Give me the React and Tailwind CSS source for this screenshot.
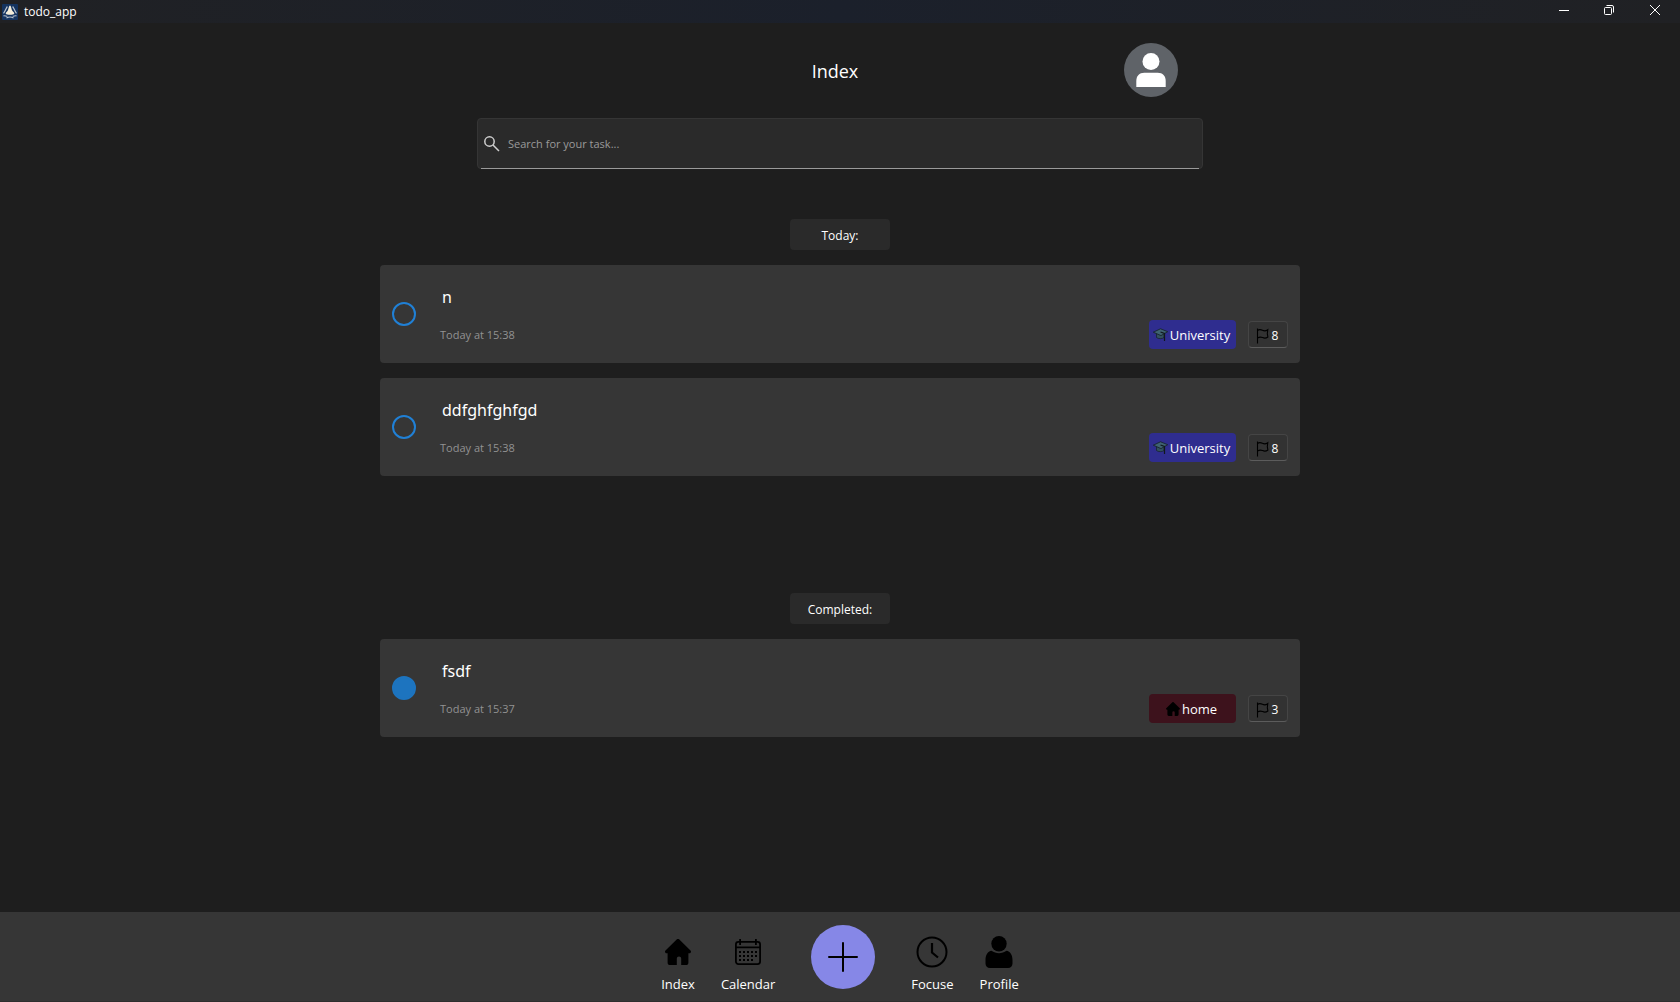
import React from "react";

const tasks = {
  today: [
    { id: "t1", title: "n", time: "Today at 15:38", category: "University", priority: 8 },
    { id: "t2", title: "ddfghfghfgd", time: "Today at 15:38", category: "University", priority: 8 },
  ],
  completed: [
    { id: "t3", title: "fsdf", time: "Today at 15:37", category: "home", priority: 3, done: true },
  ],
};

function HouseIcon({ className }) {
  return (
    <svg viewBox="0 0 26 26" className={className} fill="currentColor" aria-hidden="true">
      <path d="M11.400.7a2.300 2.300 0 0 1 3.200 0l10.900 10.900c1 1 .4 2.700-1.100 2.700h-1v9.100a2.600 2.600 0 0 1-2.600 2.600h-4.600v-6.400a2.200 2.200 0 0 0-4.400 0V26H5.200a2.600 2.600 0 0 1-2.600-2.600v-9.100h-1c-1.500 0-2.100-1.700-1.100-2.700z" />
    </svg>
  );
}

function CapIcon() {
  return (
    <svg viewBox="0 0 15 14" className="h-3.5 w-[15px] shrink-0" aria-hidden="true">
      <path d="M3.500 5v4.500c1.500 1.500 6 1.500 7.500 0V5" fill="#33505e" stroke="#141f26" strokeWidth=".7" />
      <path d="M.3 4.200 7.500.8l7.200 2.900L8 7.600z" fill="#3f6272" stroke="#141f26" strokeWidth=".8" strokeLinejoin="round" />
      <path d="M7.500 4 11.500 5.500V13" fill="none" stroke="#10181c" strokeWidth="1.200" />
    </svg>
  );
}

function FlagIcon() {
  return (
    <svg viewBox="0 0 13 16" className="h-4 w-[13px] shrink-0" fill="none" stroke="#000" strokeWidth="1.100" aria-hidden="true">
      <path d="M1.500.5v15M1.500 2.500c2-1.500 3.200-1 4.900-.2 1.900.9 3.400.9 5.400-.6l-.5 4 .6 3.300c-2.100 1.500-3.600 1.400-5.300.6-1.700-.8-3.100-.9-5.100.4" />
    </svg>
  );
}

function CalendarIcon() {
  const dots = [];
  for (let r = 0; r < 3; r++)
    for (let c = 0; c < 5; c++)
      if (!(r === 2 && c === 4)) dots.push(<rect key={r + "-" + c} x={4 + c * 4} y={12 + r * 4} width="2" height="2" />);
  return (
    <svg viewBox="0 0 26 26" className="size-[26px]" fill="currentColor" aria-hidden="true">
      <rect x=".9" y="2.900" width="24.200" height="22.200" rx="2.500" fill="none" stroke="currentColor" strokeWidth="1.800" />
      <path d="M1 7.500h24v1.700H1zM4.200 0H6v6H4.200zM20 0h1.800v6H20z" />
      {dots}
    </svg>
  );
}

function ClockIcon() {
  return (
    <svg viewBox="0 0 32 32" className="size-8" fill="none" stroke="currentColor" strokeWidth="2" aria-hidden="true">
      <circle cx="16" cy="16" r="14.500" />
      <path d="M16 7v9.500l6 5" strokeWidth="2.200" />
    </svg>
  );
}

function PersonIcon() {
  return (
    <svg viewBox="0 0 28 32" className="h-8 w-7" fill="currentColor" aria-hidden="true">
      <circle cx="14" cy="7.700" r="7.700" />
      <path d="M6.500 14.800c4.500 3.200 10.500 3.200 15 0 3.700.4 6 4.200 6 9.200v3.500c0 2.700-1.800 4.500-4.500 4.500H5c-2.700 0-4.500-1.800-4.500-4.500V24c0-5 2.300-8.800 6-9.200z" />
    </svg>
  );
}

function TitleBar() {
  return (
    <header className="flex h-[23px] items-start justify-between bg-linear-to-r from-[#202124] via-[#1b202b] to-[#202124] pr-px text-white">
      <div className="flex items-center gap-1.5 pt-[3px] pl-0.5">
        <svg viewBox="0 0 16 16" className="size-4" aria-hidden="true">
          <rect width="16" height="16" rx="1" fill="#14335f" />
          <path d="M8 1.500c1 0 1.300 3 2.200 5 .8 1.500 2.600 2.300 2 3.300-.8 1.300-7.600 1.300-8.400 0-.6-1 1.200-1.800 2-3.300.9-2 1.200-5 2.200-5z" fill="#f3ecd9" />
          <path d="M5.400 2.500C4 4 3.500 7 1.500 9.300M10.600 2.500C12 4 12.500 7 14.500 9.300M1.500 11.800c1.500-.3 2.400.4 3.800.5M14.500 11.800c-1.500-.3-2.400.4-3.800.5M4.500 14c2.300-1.300 4.700-1.300 7 0" fill="none" stroke="#b9c3cf" strokeWidth="1.200" />
        </svg>
        <span className="pt-px text-[12px] leading-4">todo_app</span>
      </div>
      <div className="flex">
        <button aria-label="Minimize" className="flex h-5 w-[45px] items-center justify-center">
          <svg viewBox="0 0 10 10" className="size-2.5" stroke="#fff"><path d="M0 5.500h10" /></svg>
        </button>
        <button aria-label="Restore" className="flex h-5 w-[45px] items-center justify-center">
          <svg viewBox="0 0 10 10" className="size-2.5" stroke="#fff" fill="none">
            <rect x=".5" y="2.500" width="7" height="7" rx="1" />
            <path d="M2.500.5H8A1.500 1.500 0 0 1 9.500 2v5.500" />
          </svg>
        </button>
        <button aria-label="Close" className="flex h-5 w-12 items-center justify-center">
          <svg viewBox="0 0 10 10" className="size-2.5" stroke="#fff"><path d="M0 0l10 10M10 0L0 10" /></svg>
        </button>
      </div>
    </header>
  );
}

function SectionButton({ children }) {
  return (
    <button className="h-[31px] w-[100px] rounded bg-[#2a2a2a] pt-0.5 text-[12px] leading-4 text-white">{children}</button>
  );
}

function TaskCard({ task }) {
  const university = task.category === "University";
  return (
    <li className="flex h-[98px] w-full items-center rounded bg-[#363636] px-3">
      <input
        type="checkbox"
        defaultChecked={task.done}
        aria-label={task.title}
        className="size-6 shrink-0 appearance-none rounded-full border-2 border-[#2080d6] checked:border-[#1d74bf] checked:bg-[#1d74bf]"
      />
      <div className="flex flex-1 flex-col gap-[19px] pt-px pl-6">
        <span className="pl-0.5 font-['Noto_Sans',sans-serif] text-[16px] leading-[22px] text-white">{task.title}</span>
        <span className="text-[11px] leading-4 text-[#929292]">{task.time}</span>
      </div>
      <div className="flex items-center gap-3 self-end pb-[14px]">
        <button
          className={
            "flex h-[29px] w-[87px] items-center justify-center gap-0.5 rounded pr-0.5 text-[13px] leading-5 text-white " +
            (university ? "bg-[#2f2d8f]" : "bg-[#3d121c]")
          }
        >
          {university ? <CapIcon /> : <HouseIcon className="size-3.5 text-black" />}
          {task.category}
        </button>
        <button className="flex h-[27px] w-10 items-center justify-center gap-[3px] rounded border border-[#454545] border-b-[#5c5c5c] bg-[#323232] pt-0.5 pr-0.5 text-[12px] leading-4 text-white">
          <FlagIcon />
          {task.priority}
        </button>
      </div>
    </li>
  );
}

function NavItem({ label, children }) {
  return (
    <a href="#" className="flex flex-col items-center gap-1.5 pt-4 text-[13px] leading-5 text-white">
      <span className="flex h-8 items-center text-black">{children}</span>
      {label}
    </a>
  );
}

export default function App() {
  return (
    <div className="flex min-h-screen flex-col bg-[#1e1e1e] font-['Open_Sans',sans-serif]">
      <TitleBar />
      <main className="flex flex-1 flex-col items-center px-4 pt-5">
        <div className="grid w-full max-w-[726px] grid-cols-[1fr_auto_1fr] items-center pr-[25px] pl-[15px]">
          <h1 className="col-start-2 pt-0.5 text-[18px] leading-6 text-white">Index</h1>
          <button aria-label="Account" className="justify-self-end">
            <svg viewBox="0 0 54 54" className="size-[54px]" aria-hidden="true">
              <circle cx="27" cy="27" r="27" fill="#5f6368" />
              <circle cx="27" cy="18.500" r="8.500" fill="#fff" />
              <path d="M12.300 44v-6c0-5 3-8.200 8-8.200h13.400c5 0 8 3.200 8 8.200v6z" fill="#fff" />
            </svg>
          </button>
        </div>

        <label className="relative mt-[21px] flex h-[51px] w-full max-w-[726px] items-center gap-2 rounded border border-[#353535] bg-[#2a2a2a] pl-1.5">
          <svg viewBox="0 0 16 16" className="size-4 shrink-0" fill="none" stroke="#cfcfcf" strokeWidth="1.500" aria-hidden="true">
            <circle cx="5.500" cy="5.500" r="4.700" />
            <path d="M9 9l6 6" />
          </svg>
          <input
            type="text"
            aria-label="Search tasks"
            placeholder="Search for your task..."
            className="h-full flex-1 bg-transparent text-[11px] leading-4 text-white outline-none placeholder:text-[#9a9a9a]"
          />
          <span className="absolute inset-x-[3px] -bottom-px h-px bg-[#9a9a9a]" />
        </label>

        <section className="mt-[50px] flex w-full max-w-[920px] flex-col items-center gap-[15px]">
          <SectionButton>Today:</SectionButton>
          <ul className="flex w-full flex-col gap-[15px]">
            {tasks.today.map((t) => <TaskCard key={t.id} task={t} />)}
          </ul>
        </section>

        <section className="mt-[117px] flex w-full max-w-[920px] flex-col items-center gap-[15px]">
          <SectionButton>Completed:</SectionButton>
          <ul className="flex w-full flex-col gap-[15px]">
            {tasks.completed.map((t) => <TaskCard key={t.id} task={t} />)}
          </ul>
        </section>
      </main>

      <nav className="flex h-[90px] items-center justify-center gap-[26px] border-b border-[#2e2e2e] bg-[#363636]">
        <NavItem label="Index"><HouseIcon className="size-[26px]" /></NavItem>
        <NavItem label="Calendar"><CalendarIcon /></NavItem>
        <button aria-label="Add task" className="mx-2.5 flex size-16 items-center justify-center rounded-full bg-[#8687e7]">
          <svg viewBox="0 0 30 30" className="size-[30px]" stroke="#000" strokeWidth="2" strokeLinecap="round"><path d="M15 1v28M1 15h28" /></svg>
        </button>
        <NavItem label="Focuse"><ClockIcon /></NavItem>
        <NavItem label="Profile"><PersonIcon /></NavItem>
      </nav>
    </div>
  );
}
